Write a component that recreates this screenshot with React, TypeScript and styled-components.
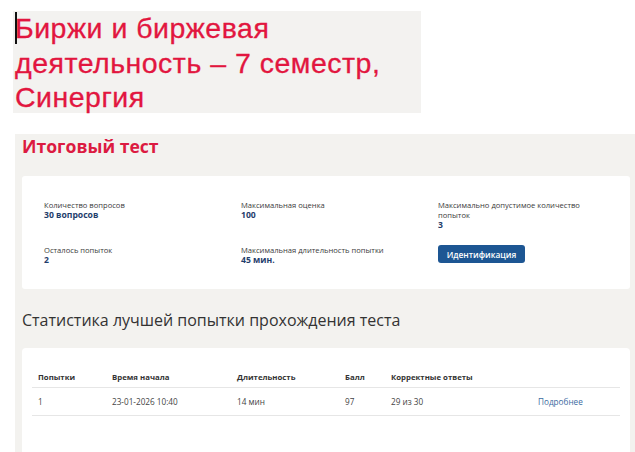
import React from 'react';
import styled, { createGlobalStyle } from 'styled-components';

const GlobalStyle = createGlobalStyle`
  html, body {
    margin: 0;
    padding: 0;
    background: #ffffff;
  }
  body {
    font-family: 'Open Sans', 'Noto Sans', sans-serif;
  }
`;

interface Info {
  label: string;
  value?: string;
}

const info: Info[] = [
  { label: 'Количество вопросов', value: '30 вопросов' },
  { label: 'Максимальная оценка', value: '100' },
  { label: 'Максимально допустимое количество попыток', value: '3' },
  { label: 'Осталось попыток', value: '2' },
  { label: 'Максимальная длительность попытки', value: '45 мин.' }
];

const columns = ['Попытки', 'Время начала', 'Длительность', 'Балл', 'Корректные ответы', ''];
const widths = [74, 125, 108, 46, 147];

const rows = [['1', '23-01-2026 10:40', '14 мин', '97', '29 из 30']];

const App: React.FC = () => (
  <Page>
    <GlobalStyle />
    <Heading>
      <Caret />
      Биржи и биржевая деятельность – 7 семестр, Синергия
    </Heading>

    <Panel>
      <PanelTitle>Итоговый тест</PanelTitle>

      <Card>
        <InfoGrid>
          {info.map((item) => (
            <InfoItem key={item.label}>
              <Label>{item.label}</Label>
              <Value>{item.value}</Value>
            </InfoItem>
          ))}
          <InfoItem>
            <Button type='button'>Идентификация</Button>
          </InfoItem>
        </InfoGrid>
      </Card>

      <SectionTitle>Статистика лучшей попытки прохождения теста</SectionTitle>

      <TableCard>
        <Table>
          <colgroup>
            {widths.map((w, i) => (
              <col key={i} style={{ width: w }} />
            ))}
            <col />
          </colgroup>
          <thead>
            <tr>
              {columns.map((c, i) => (
                <Th key={i}>{c}</Th>
              ))}
            </tr>
          </thead>
          <tbody>
            {rows.map((r, i) => (
              <tr key={i}>
                {r.map((cell, j) => (
                  <Td key={j}>{cell}</Td>
                ))}
                <Td>
                  <MoreLink href='#'>Подробнее</MoreLink>
                </Td>
              </tr>
            ))}
          </tbody>
        </Table>
      </TableCard>
    </Panel>
  </Page>
);

export default App;

const Page = styled.div`
  padding: 11px 0 0 13px;
  height: 441px;
  overflow: hidden;
`;

const Heading = styled.h1`
  position: relative;
  box-sizing: border-box;
  width: 408px;
  height: 102px;
  margin: 0;
  padding: 0 0 0 2px;
  background: #f3f2f0;
  font-family: 'Liberation Sans', Arial, sans-serif;
  font-weight: 400;
  font-size: 28.5px;
  letter-spacing: 0.5px;
  line-height: 34.5px;
  color: #e2163f;
  -webkit-text-stroke: 0.3px #e2163f;
`;

const Caret = styled.span`
  position: absolute;
  left: 2px;
  top: 1px;
  width: 2px;
  height: 32px;
  background: #111;
`;

const Panel = styled.section`
  margin: 21px 0 0 2px;
  width: 620px;
  background: #f3f2ef;
  padding: 0 5px 0 7px;
  box-sizing: border-box;
  min-height: 330px;
`;

const PanelTitle = styled.h2`
  margin: 0;
  font-family: 'Open Sans', sans-serif;
  font-weight: 700;
  font-size: 17.6px;
  line-height: 24px;
  color: #dc1a41;
`;

const Card = styled.div`
  margin-top: 18px;
  background: #ffffff;
  border-radius: 3px;
  padding: 24px 0 24px 22px;
`;

const InfoGrid = styled.div`
  display: grid;
  grid-template-columns: 197px 197px 170px;
  row-gap: 15px;
`;

const InfoItem = styled.div`
  display: flex;
  flex-direction: column;
`;

const Label = styled.div`
  font-size: 7.6px;
  line-height: 10px;
  color: #3a3a3a;
`;

const Value = styled.div`
  font-size: 8.6px;
  font-weight: 700;
  line-height: 10px;
  color: #1f3d6c;
`;

const Button = styled.button`
  width: 87px;
  height: 18px;
  padding: 0;
  border: none;
  border-radius: 3px;
  background: #1d5693;
  color: #fff;
  font-family: 'Open Sans', sans-serif;
  font-weight: 600;
  font-size: 8.4px;
  cursor: pointer;
`;

const SectionTitle = styled.h3`
  margin: 20px 0 0;
  font-family: 'Open Sans', sans-serif;
  font-weight: 400;
  font-size: 16px;
  line-height: 22px;
  color: #333;
`;

const TableCard = styled.div`
  margin-top: 17px;
  background: #ffffff;
  border-radius: 4px 4px 0 0;
  padding: 18px 10px 40px;
`;

const Table = styled.table`
  width: 100%;
  border-collapse: collapse;
  table-layout: fixed;
`;

const Th = styled.th`
  text-align: left;
  padding: 5.5px 6px;
  font-size: 7.8px;
  font-weight: 700;
  line-height: 10px;
  color: #333;
  border-bottom: 1px solid #e6e6e6;
`;

const Td = styled.td`
  padding: 8.5px 6px;
  font-size: 8.2px;
  line-height: 10px;
  color: #444;
  border-bottom: 1px solid #e6e6e6;
`;

const MoreLink = styled.a`
  color: #3c6a9f;
  text-decoration: none;
`;
